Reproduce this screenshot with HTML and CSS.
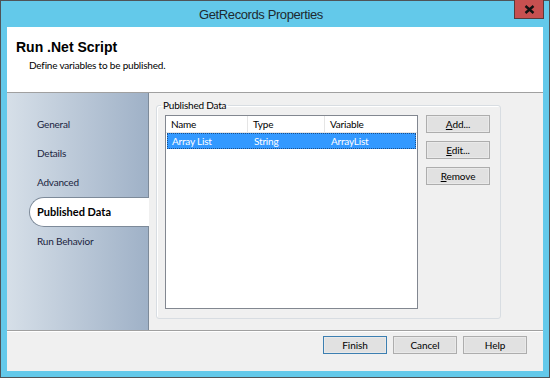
FILE: index.html
```html
<!DOCTYPE html>
<html lang="en">
<head>
<meta charset="UTF-8">
<title>GetRecords Properties</title>
<link rel="stylesheet" href="styles.css">
</head>
<body>

<div class="window">
  <div class="titlebar">
    <span class="title">GetRecords Properties</span>
    <div class="close">
      <svg width="11" height="9" viewBox="0 0 11 9"><path d="M1.5 1 L9.5 8 M9.5 1 L1.5 8" stroke="#111" stroke-width="2.4"/></svg>
    </div>
  </div>

  <div class="client">
    <div class="header">
      <h1>Run .Net Script</h1>
      <p>Define variables to be published.</p>
    </div>

    <div class="main">
      <ul class="nav">
        <li>General</li>
        <li>Details</li>
        <li>Advanced</li>
        <li class="active">Published Data</li>
        <li>Run Behavior</li>
      </ul>

      <div class="content">
        <fieldset class="group">
          <legend>Published Data</legend>
          <div class="list">
            <div class="row head">
              <span class="c1">Name</span>
              <span class="c2">Type</span>
              <span class="c3">Variable</span>
            </div>
            <div class="row selected">
              <span class="c1">Array List</span>
              <span class="c2">String</span>
              <span class="c3">ArrayList</span>
            </div>
          </div>
          <div class="side-buttons">
            <button><u>A</u>dd...</button>
            <button><u>E</u>dit...</button>
            <button><u>R</u>emove</button>
          </div>
        </fieldset>
      </div>
    </div>

    <div class="footer">
      <button class="default">Finish</button>
      <button>Cancel</button>
      <button>Help</button>
    </div>
  </div>
</div>

</body>
</html>
```

FILE: styles.css
```css
body {
  margin: 0;
  font-family: 'Lato', 'Liberation Sans', sans-serif;
  font-size: 10px;
  letter-spacing: -0.2px;
  color: #000;
}
.window {
  width: 550px;
  height: 378px;
  box-sizing: border-box;
  border: 1px solid #4f5458;
  background-color: #63c9ea;
  padding: 0 6px 6px 6px;
  display: flex;
  flex-direction: column;
}
.titlebar {
  height: 26px;
  position: relative;
  display: flex;
  align-items: center;
  justify-content: center;
  padding-right: 28px;
}
.title {
  font-family: 'Liberation Sans', sans-serif;
  font-size: 13px;
  letter-spacing: -0.4px;
  color: #1e2a30;
}
.close {
  position: absolute;
  top: -1px;
  right: -1px;
  width: 28px;
  height: 18px;
  background-color: #c75050;
  border: 1px solid #5a3a3a;
  border-top: none;
  display: flex;
  align-items: center;
  justify-content: center;
}
.client {
  flex: 1;
  background-color: #fff;
  display: flex;
  flex-direction: column;
}
.header {
  height: 66px;
  border-bottom: 1px solid #a0a0a0;
  padding: 11px 0 0 9px;
  box-sizing: border-box;
}
.header h1 {
  margin: 0;
  font-family: 'Liberation Sans', sans-serif;
  font-size: 14px;
  letter-spacing: 0;
  font-weight: bold;
  line-height: 18px;
}
.header p {
  margin: 3px 0 0 13px;
}
.main {
  height: 237px;
  display: flex;
  border-bottom: 1px solid #a0a0a0;
}
.nav {
  width: 141px;
  margin: 0;
  padding: 17px 0 0 0;
  list-style: none;
  background: linear-gradient(to right, #d6dfe8, #9fb1c7);
  border-right: 1px solid #7d8a99;
}
.nav li {
  height: 29px;
  line-height: 29px;
  padding-left: 30px;
  color: #1a2440;
}
.nav li.active {
  margin-left: 22px;
  margin-right: -1px;
  padding-left: 7px;
  background-color: #fff;
  border: 1px solid #7d8a99;
  border-right: none;
  border-radius: 15px 0 0 15px;
  height: 28px;
  line-height: 28px;
  font-size: 11px;
  letter-spacing: 0;
  font-weight: bold;
  color: #000;
}
.content {
  flex: 1;
  background-color: #f0f0f0;
  padding: 6px 42px 11px 7px;
  display: flex;
}
.group {
  flex: 1;
  margin: 0;
  padding: 4px 10px 9px 8px;
  border: 1px solid #d8dde2;
  border-radius: 3px;
  box-shadow: inset 1px 1px 0 #fff;
  display: flex;
  gap: 8px;
}
.group legend {
  padding: 0 2px;
  margin-left: -4px;
}
.list {
  width: 251px;
  background-color: #fff;
  border: 1px solid #828790;
}
.row {
  display: flex;
  height: 16px;
  line-height: 17px;
}
.row.head {
  border-bottom: 1px solid #e5e5e5;
}
.row span {
  padding-left: 5px;
  box-sizing: border-box;
}
.c1 { width: 82px; }
.c2 { width: 77px; }
.c3 { flex: 1; }
.row.head .c1,
.row.head .c2 {
  border-right: 1px solid #e5e5e5;
}
.row.selected {
  background-color: #3399ff;
  color: #fff;
  margin: 0 1px;
  border: 1px dotted #1d4f8a;
  height: 14px;
  line-height: 15px;
}
.row.selected span {
  padding-left: 4px;
}
.side-buttons {
  display: flex;
  flex-direction: column;
  gap: 8px;
}
button {
  width: 64px;
  height: 18px;
  padding: 0;
  font-family: 'Lato', 'Liberation Sans', sans-serif;
  font-size: 10px;
  letter-spacing: -0.1px;
  color: #000;
  background-color: #e1e1e1;
  border: 1px solid #adadad;
  box-shadow: inset 0 0 0 1px #e9e9e9;
}
button.default {
  border-color: #3c7fb1;
}
.footer {
  flex: 1;
  background-color: #f0f0f0;
  border-top: 1px solid #fff;
  display: flex;
  justify-content: flex-end;
  align-items: flex-start;
  gap: 6px;
  padding: 4px 16px 0 0;
}
```
